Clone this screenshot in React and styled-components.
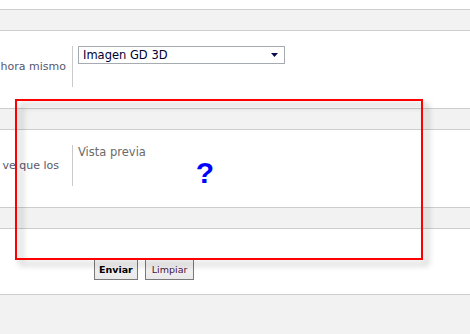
import React from "react";
import styled, { createGlobalStyle } from "styled-components";

const Global = createGlobalStyle`
  html, body { margin: 0; padding: 0; background: #ffffff; }
  body { font-family: "DejaVu Sans", Verdana, sans-serif; overflow: hidden; }
`;

const Page = styled.div`
  position: relative;
  width: 470px;
  height: 334px;
  padding-top: 9px;
  box-sizing: border-box;
  display: flex;
  flex-direction: column;
  overflow: hidden;
`;

const Band = styled.div`
  flex: ${(p) => (p.$fill ? "1" : "none")};
  height: ${(p) => (p.$fill ? "auto" : "20px")};
  background: #f2f2f2;
  border-top: 1px solid #cdcdcd;
  border-bottom: ${(p) => (p.$fill ? "none" : "1px solid #cdcdcd")};
`;

const Row = styled.div`
  display: grid;
  grid-template-columns: 72px 1fr;
  padding: 15px 0 21px;
  background: #ffffff;
`;

const Label = styled.div`
  display: flex;
  align-items: center;
  justify-content: flex-end;
  padding-right: ${(p) => p.$inset}px;
  white-space: nowrap;
  font-size: 11px;
  color: #57576e;
`;

const Value = styled.div`
  height: 41px;
  border-left: 1px solid #cacaca;
  padding-left: 5px;
  display: flex;
  flex-direction: column;
  align-items: flex-start;
`;

const Select = styled.div`
  box-sizing: border-box;
  width: 207px;
  height: 18px;
  border: 1px solid #a6abb0;
  background: #ffffff;
  display: flex;
  align-items: center;
  justify-content: space-between;
  padding: 0 6px 0 4px;
  font-size: 11.5px;
  color: #000033;
`;

const Caption = styled.div`
  font-size: 11.5px;
  line-height: 14px;
  color: #6a6a6a;
`;

const Preview = styled.div`
  width: 254px;
  text-align: center;
  font-family: "Liberation Sans", Arial, sans-serif;
  font-weight: bold;
  font-size: 30px;
  line-height: 27px;
  color: #0000ff;
`;

const ButtonBar = styled.div`
  display: flex;
  gap: 7px;
  padding: 30px 0 14px 94px;
  background: #ffffff;
`;

const Button = styled.button`
  box-sizing: border-box;
  height: 21px;
  padding: 0 ${(p) => (p.$primary ? 4 : 6)}px;
  border: 1px solid #7a7a7a;
  background: linear-gradient(#f7f7f7, #e9e9e9);
  font-family: "DejaVu Sans", Verdana, sans-serif;
  font-size: 9.5px;
  font-weight: ${(p) => (p.$primary ? "bold" : "normal")};
  color: ${(p) => (p.$primary ? "#000000" : "#4a1240")};
  margin: 0;
`;

const Frame = styled.div`
  position: absolute;
  left: 15px;
  top: 99px;
  width: 408px;
  height: 161px;
  box-sizing: border-box;
  border: 2px solid #ff0000;
  filter: drop-shadow(5px 5px 3px rgba(0, 0, 0, 0.32));
  pointer-events: none;
`;

export default function App() {
  return (
    <>
      <Global />
      <Page>
        <Band />
        <Row>
          <Label $inset={6}>hora mismo</Label>
          <Value>
            <Select>
              <span>Imagen GD 3D</span>
              <svg width="7" height="4" viewBox="0 0 7 4">
                <polygon points="0,0 7,0 3.5,4" fill="#0a0a50" />
              </svg>
            </Select>
          </Value>
        </Row>
        <Band />
        <Row>
          <Label $inset={13}>ve que los</Label>
          <Value>
            <Caption>Vista previa</Caption>
            <Preview>?</Preview>
          </Value>
        </Row>
        <Band />
        <ButtonBar>
          <Button $primary>Enviar</Button>
          <Button>Limpiar</Button>
        </ButtonBar>
        <Band $fill />
        <Frame />
      </Page>
    </>
  );
}
